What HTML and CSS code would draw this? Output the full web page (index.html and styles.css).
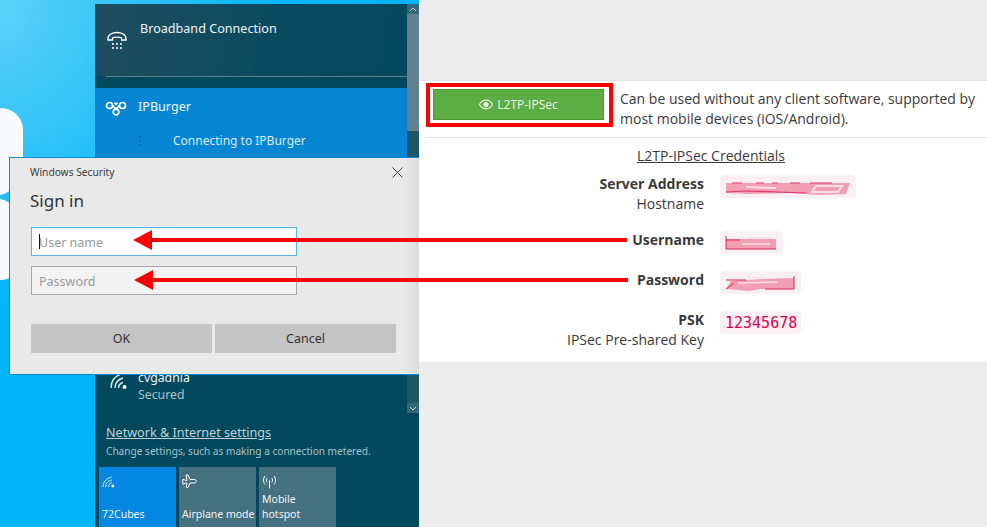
FILE: index.html
```html
<!DOCTYPE html>
<html lang="en">
<head>
<meta charset="utf-8">
<title>L2TP-IPSec</title>
<link rel="stylesheet" href="styles.css">
</head>
<body>
<div class="page">
  <section class="desktop">
    <div class="blob blob-top"></div>
    <div class="blob blob-low"></div>
    <aside class="flyout">
      <div class="conn-list">
        <div class="broadband">
          <svg class="ic-phone" viewBox="0 0 20 20" fill="none" stroke="#fff"><path d="M1 7.500C1 3.500 5.500 1.500 10 1.500s9 2 9 6v1.500h-4.500V6.800c-1.500-.8-7.500-.8-9 0V9H1z" stroke-width="1.300"/><path d="M5 13h2M9 13h2M13 13h2M5 17h2M9 17h2M13 17h2" stroke-width="1.700"/></svg>
          <div class="bb-label">Broadband Connection</div>
        </div>
        <div class="bb-rule"></div>
        <div class="vpn">
          <div class="vpn-head">
            <svg class="ic-vpn" viewBox="0 0 22 17" fill="none" stroke="#fff" stroke-width="1.700"><circle cx="4.500" cy="6.500" r="3"/><circle cx="17.500" cy="6.500" r="3"/><circle cx="11" cy="13" r="2.800"/><path d="M7.500 6.500L11 10.200 14.500 6.500"/><path d="M8.500 3.800h5L11 6.800z" fill="#fff" stroke="none"/></svg>
            <span class="vpn-name">IPBurger</span>
          </div>
          <div class="vpn-status"><svg class="spinner" viewBox="0 0 4 12"><circle cx="2" cy="2" r="1.100" fill="#0a62b8"/><circle cx="1.500" cy="6" r="1.100" fill="#0a62b8"/><circle cx="2" cy="10" r="1.100" fill="#0a62b8"/></svg>Connecting to IPBurger</div>
        </div>
        <div class="dark-fill">
          <div class="wifi-row">
            <svg class="ic-wifi" viewBox="0 0 18 18" fill="none" stroke="#dfe9ec" stroke-width="1.400"><path d="M1 16C1 9 5 4 12 1.500M5 16C5 11 8 7.500 13 6M8.500 16c0-2.500 1.500-4.500 4.500-5.500"/><circle cx="14.500" cy="15" r="2" fill="#fff" stroke="none"/></svg>
            <div class="wifi-text"><div class="wifi-name">cvgadnia</div><div class="wifi-sub">Secured</div></div>
          </div>
        </div>
      </div>
      <div class="scrollbar">
        <span class="sb-up"><svg viewBox="0 0 8 5" class="sb-arrow"><path d="M1 4l3-3 3 3" fill="none" stroke="#c6d3d8" stroke-width="1"/></svg></span>
        <span class="sb-thumb"></span>
        <span class="sb-track"></span>
        <span class="sb-down"><svg viewBox="0 0 8 5" class="sb-arrow"><path d="M1 1l3 3 3-3" fill="none" stroke="#c6d3d8" stroke-width="1"/></svg></span>
      </div>
      <div class="settings">
        <div class="set-link">Network &amp; Internet settings</div>
        <div class="set-sub">Change settings, such as making a connection metered.</div>
      </div>
      <div class="tiles">
        <div class="tile tile-on">
          <svg class="tile-ic" viewBox="0 0 15 15" fill="none" stroke="#e4f1fb" stroke-width="1"><path d="M1 13C1 8 4 4.500 9.500 3M3.700 13c0-3.500 2-6 6-7M6.300 13c0-2 1.100-3.500 3.500-4.200"/><circle cx="10.800" cy="12" r="1.400" fill="#fff" stroke="none"/></svg>
          <div class="tile-label">72Cubes</div>
        </div>
        <div class="tile">
          <svg class="tile-ic" viewBox="0 0 15 15" fill="none" stroke="#fff" stroke-width="1"><path d="M4 1h2l2 4.500h4c1.500 0 2.500.8 2.500 1.800S13.500 9 12 9H8l-2 4.500H4.200L5 9H3l-.8 1.200H.8V5.500h1.400L3 6.300h2z"/></svg>
          <div class="tile-label">Airplane mode</div>
        </div>
        <div class="tile">
          <svg class="tile-ic" viewBox="0 0 15 15" fill="none" stroke="#fff" stroke-width="1"><path d="M7.500 6.500v8M3 2C1 4.500 1 8 3 10.500M12 2c2 2.500 2 6 0 8.500M5.200 4.200c-1 1.200-1 3 0 4.200M9.800 4.200c1 1.200 1 3 0 4.200"/></svg>
          <div class="tile-label">Mobile<br>hotspot</div>
        </div>
      </div>
    </aside>
    <div class="dialog">
      <div class="dlg-head">
        <span class="dlg-title">Windows Security</span>
        <svg class="dlg-x" viewBox="0 0 11 11"><path d="M.5.500l10 10M10.500.500l-10 10" stroke="#444" stroke-width="1" fill="none"/></svg>
      </div>
      <div class="dlg-heading">Sign in</div>
      <div class="field field-on"><span class="caret"></span><span class="ph ph-user">User name</span></div>
      <div class="field"><span class="ph">Password</span></div>
      <div class="dlg-btns">
        <div class="dlg-btn">OK</div>
        <div class="dlg-btn">Cancel</div>
      </div>
    </div>
  </section>

  <main class="side">
    <div class="side-top"></div>
    <div class="panel">
      <div class="proto">
        <div class="redbox"><div class="green-btn">
          <svg class="eye" viewBox="0 0 16 12"><path d="M8 1C4.500 1 1.800 3.500.5 6c1.300 2.500 4 5 7.500 5s6.200-2.500 7.500-5C14.200 3.500 11.500 1 8 1z" fill="none" stroke="#e6f3e1" stroke-width="1.200"/><circle cx="8" cy="6" r="3" fill="#e6f3e1"/></svg>
          <span>L2TP-IPSec</span>
        </div></div>
        <p class="proto-text">Can be used without any client software, supported by most mobile devices (iOS/Android).</p>
      </div>
      <div class="creds">
        <div class="creds-title"><u>L2TP-IPSec Credentials</u></div>
        <div class="cred-row cred-tall">
          <div class="cred-label"><b>Server Address</b><span>Hostname</span></div>
          <div class="code code-server"><svg class="scrib" viewBox="0 0 136 23"><path d="M6 8h124l-4 11-26 1-30-2-40 1-24-1z" fill="#f29fb6"/><path d="M12 8h10M36 8h8M52 8h6M70 8h10M90 8h22M6 17l20-1 60 2" stroke="#e03a68" stroke-width="1.200" fill="none"/><path d="M96 11h26l-4 6H92zM26 12l30 1" stroke="#fbdfe8" stroke-width="2" fill="none"/></svg></div>
        </div>
        <div class="cred-row">
          <div class="cred-label"><b>Username</b></div>
          <div class="code code-user"><svg class="scrib" viewBox="0 0 63 23"><path d="M6 8h50v10H6z" fill="#f29fb6"/><path d="M6 5v13M6 18h50M6 9h14" stroke="#dd2458" stroke-width="1" fill="none"/><path d="M28 7h24M22 13h28" stroke="#fbdfe8" stroke-width="1.500" fill="none"/></svg></div>
        </div>
        <div class="cred-row">
          <div class="cred-label"><b>Password</b></div>
          <div class="code code-pass"><svg class="scrib" viewBox="0 0 81 23"><path d="M6 18l5-8 30-2 33-1v11H40l-10 2z" fill="#f29fb6"/><path d="M74 5v13M6 9h20M6 18l8-6M45 18h29" stroke="#dd2458" stroke-width="1" fill="none"/><path d="M18 12l40-1M28 6h16" stroke="#fbdfe8" stroke-width="1.500" fill="none"/></svg></div>
        </div>
        <div class="cred-row">
          <div class="cred-label"><b>PSK</b><span>IPSec Pre-shared Key</span></div>
          <div class="code">12345678</div>
        </div>
      </div>
    </div>
    <div class="side-bottom"></div>
  </main>

  <svg class="arrows" viewBox="0 0 987 527">
    <path d="M150 240H627" stroke="#f00" stroke-width="4"/>
    <path d="M133 240l19-10v20z" fill="#f00"/>
    <path d="M150 280H628" stroke="#f00" stroke-width="4"/>
    <path d="M134 280l19-10v20z" fill="#f00"/>
  </svg>
</div>
</body>
</html>
```
FILE: styles.css
```css
* { box-sizing: border-box; }
html, body { margin: 0; height: 100%; }
body { font-family: "Open Sans", "Noto Sans", sans-serif; overflow: hidden; }
.page { position: relative; display: flex; width: 987px; height: 527px; }

.desktop {
  position: relative; width: 419px; height: 527px; flex: none; overflow: hidden;
  padding: 4px 0 0 95px;
  background: #03b5f6 radial-gradient(circle at -20px 0, #62d3f8 0, #38c6f7 130px, #03b5f6 300px);
}
.blob { position: absolute; left: -40px; width: 63px; background: #f7fbfd; }
.blob-top { top: 108px; height: 88px; border-radius: 0 22px 30px 0; }
.blob-low { top: 198px; height: 82px; border-radius: 0 30px 22px 0; }
.flyout { position: relative; width: 324px; height: 523px; display: flex; flex-direction: column; font-family: "Noto Sans", sans-serif; background: #02495d; }
.conn-list { height: 407px; flex: none; }
.broadband { height: 72px; padding: 15px 0 0 12px; display: flex; gap: 13px; background: linear-gradient(100deg, #1f4d60 0, #0a4a5e 55%, #02495d 100%); }
.ic-phone { width: 20px; height: 20px; margin-top: 12px; flex: none; }
.bb-label { color: #eef3f5; font-size: 12.600px; line-height: 20px; }
.bb-rule { height: 12px; margin-left: 11px; border-top: 1px solid #5c8290; background: #02495d; }
.vpn { height: 69px; background: #0585d2; padding: 10px 0 0 10px; color: #f2f8fc; }
.vpn-head { display: flex; align-items: center; gap: 11px; }
.ic-vpn { width: 22px; height: 17px; flex: none; }
.vpn-name { font-size: 12.600px; line-height: 18px; }
.vpn-status { display: flex; align-items: center; margin: 16px 0 0 33px; font-size: 12px; line-height: 18px; color: #d9edf9; }
.spinner { width: 4px; height: 12px; margin-right: 31px; flex: none; }
.dark-fill { height: 254px; background: #02495d; padding-top: 212px; overflow: hidden; }
.wifi-row { display: flex; gap: 10px; padding-left: 15px; }
.ic-wifi { width: 18px; height: 18px; margin-top: 3px; flex: none; }
.wifi-name { font-size: 12.300px; line-height: 17px; color: #eef3f5; }
.wifi-sub { font-size: 12.300px; line-height: 18px; color: #a9c0c8; }
.scrollbar { position: absolute; right: 0; top: 0; width: 12px; height: 409px; display: flex; flex-direction: column; background: #1c5668; }
.sb-up, .sb-down { height: 10px; flex: none; display: flex; align-items: center; justify-content: center; background: #32687a; }
.sb-arrow { width: 8px; height: 5px; }
.sb-thumb { height: 117px; flex: none; background: #62808d; }
.sb-track { flex: 1; }
.settings { margin-top: 13px; padding-left: 11px; }
.set-link { font-size: 12.600px; line-height: 18px; color: #bfd1d7; text-decoration: underline; }
.set-sub { font-size: 10.100px; line-height: 18px; color: #a9c1c9; }
.tiles { display: flex; gap: 3.500px; padding: 7px 0 0 4px; }
.tile { width: 76.500px; height: 60px; background: #44707f; padding: 0 0 0 3px; display: flex; flex-direction: column; color: #f2f6f8; }
.tile-on { background: #0487e3; }
.tile-ic { width: 15px; height: 15px; margin-top: 7px; flex: none; }
.tile-label { margin-top: auto; margin-bottom: 5px; font-size: 10.500px; line-height: 15px; white-space: nowrap; }

.dialog {
  position: absolute; left: 9px; top: 157px; width: 411px; height: 218px;
  background: linear-gradient(90deg, #e9e9e9 0, #e9e9e9 96%, #d8dadb 100%);
  border: 1px solid #0a8ad2; border-right: 0;
  padding: 0 22px 0 21px; font-family: "Noto Sans", sans-serif; color: #333;
}
.dlg-head { display: flex; justify-content: space-between; align-items: center; height: 28px; margin-left: -1px; }
.dlg-title { font-size: 10.200px; color: #3b3b3b; }
.dlg-x { width: 11px; height: 11px; margin-right: -5px; }
.dlg-heading { font-size: 17px; line-height: 24px; margin: 3px 0 0 -1px; }
.field {
  display: flex; align-items: center; width: 266px; height: 29px; margin-top: 10px;
  background: #f3f3f3; border: 1px solid #a7a7a7; padding-left: 7px;
  font-size: 12.500px; color: #9a9a9a;
}
.field-on { background: #fff; border-color: #5cb1ea; margin-top: 14px; }
.ph { position: relative; top: 1px; }
.ph-user { margin-left: -1px; }
.caret { width: 1px; height: 15px; background: #111; }
.dlg-btns { display: flex; gap: 3px; margin-top: 29px; width: 365px; }
.dlg-btn { flex: 1; height: 29px; background: #c4c4c4; display: flex; align-items: center; justify-content: center; font-size: 12.500px; color: #333; }

.side { flex: 1; display: flex; flex-direction: column; background: #ececec; }
.side-top { height: 80px; flex: none; }
.side-bottom { flex: 1; }
.panel { height: 282px; flex: none; background: #fff; padding-left: 7px; border-top: 1px solid #e3e3e3; color: #3a3a3a; font-size: 14px; }
.proto { height: 57px; display: flex; border-bottom: 1px solid #e2e2e2; padding-top: 2px; }
.redbox { width: 187px; height: 44px; border: 4px solid #f00; padding: 2px 5px 0 3px; flex: none; background: #fff; }
.green-btn { height: 31px; background: #5cad43; border: 1px solid #4a9a33; color: #eef7ea; display: flex; align-items: center; justify-content: center; gap: 4px; font-size: 12px; }
.eye { width: 14px; height: 11px; }
.proto-text { margin: 6px 0 0; padding: 0 8px 0 7px; line-height: 20px; font-size: 14px; }
.creds { padding-top: 7px; }
.creds-title { text-align: center; line-height: 22px; font-size: 14px; padding-left: 9px; }
.cred-row { display: flex; gap: 16px; margin-top: 16px; }
.creds-title + .cred-row { margin-top: 7px; }
.cred-tall { height: 40px; }
.cred-label { width: 278px; text-align: right; display: flex; flex-direction: column; line-height: 20px; }
.cred-label b { font-weight: 700; }
.code {
  height: 23px; margin-top: 1px; padding: 0 4px 0 5px; background: #f9f0f4; border-radius: 4px; color: #d6004f;
  font-family: "DejaVu Sans Mono", "Liberation Mono", monospace; font-size: 15px; line-height: 24px; align-self: flex-start;
}
.code-server { width: 136px; padding: 0; }
.code-user { width: 63px; padding: 0; }
.code-pass { width: 81px; padding: 0; }
.scrib { display: block; width: 100%; height: 100%; filter: blur(.6px); }
.arrows { position: absolute; left: 0; top: 0; width: 987px; height: 527px; pointer-events: none; }
```
